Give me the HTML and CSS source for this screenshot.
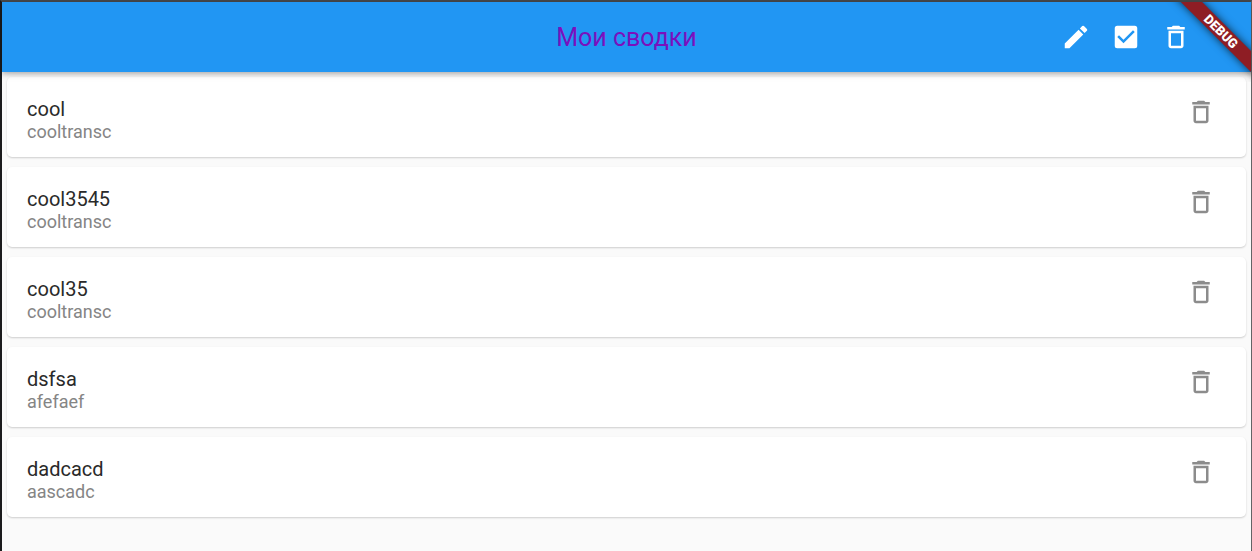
FILE: index.html
```html
<!DOCTYPE html>
<html lang="ru">
<head>
<meta charset="utf-8">
<title>Мои сводки</title>
<link rel="stylesheet" href="styles.css">
</head>
<body>
<svg class="symbols" aria-hidden="true">
  <symbol id="trash" viewBox="0 0 24 24"><path d="M6 19c0 1.100.9 2 2 2h8c1.100 0 2-.9 2-2V7H6v12zM8 9h8v10H8V9zm7.500-5l-1-1h-5l-1 1H5v2h14V4z"/></symbol>
  <symbol id="edit" viewBox="0 0 24 24"><path d="M3 17.250V21h3.750L17.810 9.940l-3.750-3.750L3 17.250zM20.710 7.040a1 1 0 0 0 0-1.410l-2.340-2.340a1 1 0 0 0-1.410 0l-1.830 1.830 3.750 3.750 1.830-1.830z"/></symbol>
  <symbol id="check" viewBox="0 0 24 24"><path d="M19 3H5a2 2 0 0 0-2 2v14a2 2 0 0 0 2 2h14a2 2 0 0 0 2-2V5a2 2 0 0 0-2-2zm-9 14l-5-5 1.410-1.410L10 14.170l7.590-7.590L19 8l-9 9z"/></symbol>
</svg>
<div class="window">
  <header class="app-bar">
    <h1 class="app-title">Мои сводки</h1>
    <div class="actions">
      <button class="icon-button" type="button" aria-label="Редактировать"><svg class="icon"><use href="#edit"/></svg></button>
      <button class="icon-button" type="button" aria-label="Выбрать все"><svg class="icon"><use href="#check"/></svg></button>
      <button class="icon-button" type="button" aria-label="Удалить"><svg class="icon"><use href="#trash"/></svg></button>
    </div>
  </header>
  <main>
    <ul class="list">
      <li class="card"><div class="text"><h2 class="name">cool</h2><p class="detail">cooltransc</p></div><button class="icon-button muted" type="button" aria-label="Удалить cool"><svg class="icon"><use href="#trash"/></svg></button></li>
      <li class="card"><div class="text"><h2 class="name">cool3545</h2><p class="detail">cooltransc</p></div><button class="icon-button muted" type="button" aria-label="Удалить cool3545"><svg class="icon"><use href="#trash"/></svg></button></li>
      <li class="card"><div class="text"><h2 class="name">cool35</h2><p class="detail">cooltransc</p></div><button class="icon-button muted" type="button" aria-label="Удалить cool35"><svg class="icon"><use href="#trash"/></svg></button></li>
      <li class="card"><div class="text"><h2 class="name">dsfsa</h2><p class="detail">afefaef</p></div><button class="icon-button muted" type="button" aria-label="Удалить dsfsa"><svg class="icon"><use href="#trash"/></svg></button></li>
      <li class="card"><div class="text"><h2 class="name">dadcacd</h2><p class="detail">aascadc</p></div><button class="icon-button muted" type="button" aria-label="Удалить dadcacd"><svg class="icon"><use href="#trash"/></svg></button></li>
    </ul>
  </main>
  <div class="banner"><span class="ribbon">DEBUG</span></div>
</div>
</body>
</html>
```
FILE: styles.css
```css
* { box-sizing: border-box; }
body {
  margin: 0;
  font-family: Roboto, sans-serif;
  background: #fafafa;
}
h1, h2, p, ul { margin: 0; padding: 0; font-weight: 400; }
.symbols { display: none; }
.window {
  position: relative;
  min-height: 100vh;
  border: solid #1b1b1d;
  border-width: 2px 1px 0 2px;
  border-top-color: #47494c;
  border-right-color: #626466;
}
.app-bar {
  position: relative;
  display: grid;
  grid-template-columns: 1fr auto 1fr;
  align-items: center;
  height: 70px;
  background: #2196f3;
  box-shadow: 0 2px 5px rgba(0, 0, 0, .25), 0 1px 10px rgba(0, 0, 0, .1);
}
.app-title {
  grid-column: 2;
  font-size: 25px;
  line-height: 32px;
  padding-top: 2px;
  color: #7a10bd;
}
.actions {
  display: flex;
  justify-content: flex-end;
  padding-right: 50px;
}
.icon-button {
  display: grid;
  place-items: center;
  width: 50px;
  height: 50px;
  padding: 0;
  border: 0;
  background: none;
  color: #fff;
}
.icon { width: 30px; height: 30px; fill: currentColor; }
.muted { color: #8c8c8c; }
.list {
  display: flex;
  flex-direction: column;
  gap: 10px;
  padding: 5px;
  list-style: none;
}
.card {
  display: flex;
  justify-content: space-between;
  align-items: flex-start;
  min-height: 80px;
  padding: 10px 20px;
  border-radius: 5px;
  background: #fff;
  box-shadow: 0 1px 2px rgba(0, 0, 0, .18);
}
.text { padding-top: 10px; }
.name { font-size: 20px; line-height: 24px; color: #2a2a2a; }
.detail { font-size: 18px; line-height: 22px; color: #858585; }
.banner {
  position: absolute;
  top: 0;
  right: 0;
  width: 100px;
  height: 80px;
  overflow: hidden;
  pointer-events: none;
}
.ribbon {
  position: absolute;
  top: 22px;
  right: -50px;
  width: 160px;
  transform: rotate(45deg);
  background: #8e1d24;
  box-shadow: 0 0 8px rgba(0, 0, 0, .7);
  color: #fff;
  font-size: 13px;
  font-weight: 900;
  line-height: 15px;
  text-align: center;
}
```
